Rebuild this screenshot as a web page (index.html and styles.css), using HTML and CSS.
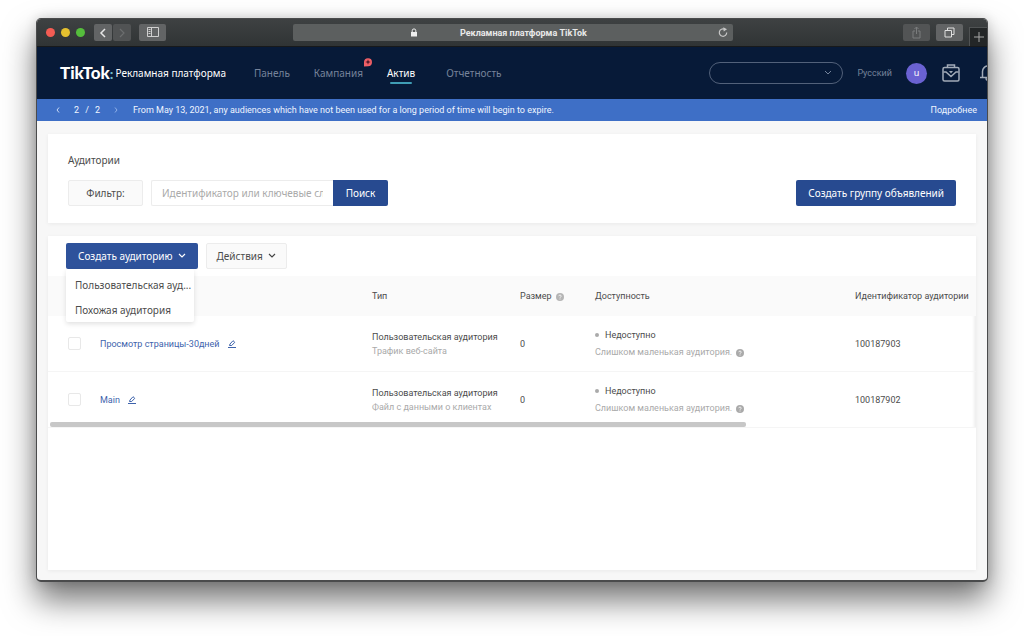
FILE: index.html
```html
<!DOCTYPE html>
<html lang="ru">
<head>
<meta charset="utf-8">
<title>Рекламная платформа TikTok</title>
<link rel="stylesheet" href="styles.css">
</head>
<body>
<div class="window">
  <div class="browser-bar">
    <div class="lights"><span class="light red"></span><span class="light yellow"></span><span class="light green"></span></div>
    <div class="history">
      <button class="chrome-btn back" aria-label="Назад"><svg width="8" height="10" viewBox="0 0 8 10"><path d="M6 1 2 5l4 4" fill="none" stroke="#e6e6e6" stroke-width="1.5"/></svg></button>
      <button class="chrome-btn forward" aria-label="Вперёд"><svg width="8" height="10" viewBox="0 0 8 10"><path d="m2 1 4 4-4 4" fill="none" stroke="#6c6e6f" stroke-width="1.2"/></svg></button>
    </div>
    <button class="chrome-btn sidebar" aria-label="Боковая панель"><svg width="13" height="11" viewBox="0 0 13 11"><path d="M1.500.500h11v9h-11zM5.500.500v9M2.500 2.500h2M2.500 4.500h2M2.500 6.500h2" fill="none" stroke="#cfcfcf"/></svg></button>
    <div class="address">
      <svg class="lock" width="8" height="9" viewBox="0 0 8 9"><path d="M1 4h6v4.500H1z" fill="#eee"/><path d="M2.200 4V2.700a1.800 1.800 0 0 1 3.600 0V4" fill="none" stroke="#eee"/></svg>
      <span class="page-title">Рекламная платформа TikTok</span>
      <svg class="reload" width="10" height="11" viewBox="0 0 10 11"><path d="M8.700 5.500A3.700 3.700 0 1 1 6.500 2.200" fill="none" stroke="#c8c8c8" stroke-width="1.200"/><path d="M5.300.2 9 2.300 5.700 4.600z" fill="#c8c8c8"/></svg>
    </div>
    <button class="chrome-btn share" aria-label="Поделиться"><svg width="11" height="13" viewBox="0 0 11 13"><path d="M4 5H2v7h7V5H7M5.500 8V1M3.500 3l2-2 2 2" fill="none" stroke="#7b7d7e"/></svg></button>
    <button class="chrome-btn tabs" aria-label="Вкладки"><svg width="11" height="11" viewBox="0 0 11 11"><path d="M1 3.500h6.500V10H1z" fill="none" stroke="#e0e0e0"/><path d="M3.500 3.500V1H10v6.500H7.500" fill="none" stroke="#e0e0e0"/></svg></button>
    <button class="new-tab" aria-label="Новая вкладка"><svg width="10" height="10" viewBox="0 0 10 10"><path d="M5 0v10M0 5h10" stroke="#a8a8a8"/></svg></button>
  </div>

  <header class="site-header">
    <div class="brand"><span class="logo">TikTok<span class="colon">:</span></span><span class="product">Рекламная платформа</span></div>
    <nav class="nav">
      <a href="#">Панель</a>
      <a href="#">Кампания<svg class="spark" width="10" height="10" viewBox="0 0 10 10"><path d="M1 9.500V5a4 4 0 1 1 4 4.200z" fill="#ee5f66"/><path d="M5 2.300 5.700 4.300 7.700 5 5.700 5.700 5 7.700 4.300 5.700 2.300 5 4.300 4.300z" fill="#4a1626"/></svg></a>
      <a href="#" class="active">Актив</a>
      <a href="#">Отчетность</a>
    </nav>
    <button class="account" aria-label="Аккаунт"><svg width="8" height="6" viewBox="0 0 8 6"><path d="m1 1 3 3 3-3" fill="none" stroke="#74839b"/></svg></button>
    <a href="#" class="lang">Русский</a>
    <span class="avatar">u</span>
    <button class="icon-btn case" aria-label="Бизнес-центр"><svg width="18" height="18" viewBox="0 0 18 18"><g fill="none" stroke="#a2abb8" stroke-width="1.500"><rect x="1" y="3.500" width="16" height="13.500" rx="1.500"/><path d="M5.500 3.500V1h7v2.500M1.500 8 4 8 9 12.500 14 8h2.500"/></g><path d="M7 7h4L9 9.500z" fill="#a2abb8"/></svg></button>
    <button class="icon-btn bell" aria-label="Уведомления"><svg width="18" height="18" viewBox="0 0 18 18"><path d="M1 13.500h16M3.500 13.500V7.500a5.500 5.500 0 0 1 11 0v6M9 2V.5M7 14c0 3 4 3 4 0" fill="none" stroke="#a2abb8" stroke-width="1.500"/></svg></button>
  </header>

  <div class="notice">
    <button class="step" aria-label="Предыдущее"><svg width="4" height="6" viewBox="0 0 4 6"><path d="M3 .5 1 3l2 2.500" fill="none" stroke="#c9d9f4"/></svg></button>
    <span class="count"><span>2</span><span>/</span><span>2</span></span>
    <button class="step" aria-label="Следующее"><svg width="4" height="6" viewBox="0 0 4 6"><path d="m1 .5 2 2.500-2 2.500" fill="none" stroke="#8fb0e8"/></svg></button>
    <p class="message">From May 13, 2021, any audiences which have not been used for a long period of time will begin to expire.</p>
    <a href="#" class="more">Подробнее</a>
  </div>

  <main class="content">
    <section class="card search-card">
      <h1>Аудитории</h1>
      <div class="search-row">
        <button class="btn plain filter">Фильтр:</button>
        <form class="search">
          <input type="text" aria-label="Поиск аудитории" placeholder="Идентификатор или ключевые сл">
          <button type="button" class="btn primary find">Поиск</button>
        </form>
        <button class="btn primary group">Создать группу объявлений</button>
      </div>
    </section>

    <section class="card list-card">
      <div class="toolbar">
        <div class="dropdown">
          <button class="btn primary create">Создать аудиторию <svg width="8" height="6" viewBox="0 0 8 6"><path d="m1 1 3 3 3-3" fill="none" stroke="#fff" stroke-width="1.200"/></svg></button>
          <div class="menu">
            <button>Пользовательская ауд...</button>
            <button>Похожая аудитория</button>
          </div>
        </div>
        <button class="btn plain actions">Действия <svg width="8" height="6" viewBox="0 0 8 6"><path d="m1 1 3 3 3-3" fill="none" stroke="#444" stroke-width="1.200"/></svg></button>
      </div>
      <div class="table-wrap">
        <table>
          <colgroup><col class="c-check"><col class="c-name"><col class="c-type"><col class="c-size"><col class="c-state"><col></colgroup>
          <thead>
            <tr><th></th><th></th><th>Тип</th><th>Размер <svg class="help" width="8" height="8" viewBox="0 0 8 8"><circle cx="4" cy="4" r="4" fill="#b5b5b5"/><path d="M2.800 3.200c0-1.600 2.400-1.600 2.400 0C5.200 4 4 4 4 4.800M4 5.500v1" fill="none" stroke="#fff" stroke-width=".8"/></svg></th><th>Доступность</th><th>Идентификатор аудитории</th></tr>
          </thead>
          <tbody>
            <tr>
              <td><input type="checkbox" aria-label="Просмотр страницы-30дней"></td>
              <td><a href="#">Просмотр страницы-30дней</a><button class="edit" aria-label="Изменить"><svg width="8" height="8" viewBox="0 0 8 8"><path d="M1.500 5.500 2 4 5 .7 6.800 2.300 3.700 5.500zM0 7.500h8" fill="none" stroke="#3e63ac"/></svg></button></td>
              <td><div class="main">Пользовательская аудитория</div><div class="sub">Трафик веб-сайта</div></td>
              <td>0</td>
              <td><div class="state">Недоступно</div><div class="reason">Слишком маленькая аудитория. <svg class="help" width="8" height="8" viewBox="0 0 8 8"><circle cx="4" cy="4" r="4" fill="#aaa"/><path d="M2.800 3.200c0-1.600 2.400-1.600 2.400 0C5.200 4 4 4 4 4.800M4 5.500v1" fill="none" stroke="#fff" stroke-width=".8"/></svg></div></td>
              <td>100187903</td>
            </tr>
            <tr>
              <td><input type="checkbox" aria-label="Main"></td>
              <td><a href="#">Main</a><button class="edit" aria-label="Изменить"><svg width="8" height="8" viewBox="0 0 8 8"><path d="M1.500 5.500 2 4 5 .7 6.800 2.300 3.700 5.500zM0 7.500h8" fill="none" stroke="#3e63ac"/></svg></button></td>
              <td><div class="main">Пользовательская аудитория</div><div class="sub">Файл с данными о клиентах</div></td>
              <td>0</td>
              <td><div class="state">Недоступно</div><div class="reason">Слишком маленькая аудитория. <svg class="help" width="8" height="8" viewBox="0 0 8 8"><circle cx="4" cy="4" r="4" fill="#aaa"/><path d="M2.800 3.200c0-1.600 2.400-1.600 2.400 0C5.200 4 4 4 4 4.800M4 5.500v1" fill="none" stroke="#fff" stroke-width=".8"/></svg></div></td>
              <td>100187902</td>
            </tr>
          </tbody>
        </table>
        <div class="scroll-thumb"></div>
      </div>
    </section>
  </main>
</div>
</body>
</html>
```
FILE: styles.css
```css
* { box-sizing: border-box; }

body {
  margin: 0;
  min-height: 100vh;
  padding: 18px 36px 54px;
  display: flex;
  background: #fff;
  color: #4c4c4c;
  font: 10px/16px "Noto Sans", "Open Sans", sans-serif;
}

button, input { font: inherit; color: inherit; }
button { border: 0; padding: 0; background: none; display: inline-flex; align-items: center; justify-content: center; }
a { color: inherit; text-decoration: none; }
svg { display: block; flex: none; }

.window {
  flex: 1;
  min-width: 0;
  display: flex;
  flex-direction: column;
  overflow: hidden;
  border: 1px solid #4a4b4c;
  border-bottom-width: 2px;
  border-radius: 5px;
  background: #f7f7f7;
  box-shadow: 0 18px 32px rgba(0, 0, 0, .55), 0 0 12px rgba(0, 0, 0, .15);
}

/* Browser chrome */
.browser-bar {
  height: 28px;
  display: flex;
  align-items: center;
  padding-left: 9px;
  background: linear-gradient(#3e4142, #303435);
  border-bottom: 1px solid #17191b;
}
.lights { display: flex; gap: 6px; }
.light { width: 9px; height: 9px; border-radius: 50%; }
.red { background: #f45c53; }
.yellow { background: #e5c02f; }
.green { background: #55bd3c; }
.history { display: flex; gap: 1px; margin-left: 9px; }
.chrome-btn { height: 17px; width: 27px; border-radius: 2px; background: #626465; }
.history .chrome-btn { width: 18px; }
.history .forward { background: #515354; }
.sidebar { margin-left: 8px; }
.address {
  flex: 1;
  height: 17px;
  margin-left: 127px;
  display: flex;
  align-items: center;
  padding: 0 5px 0 117px;
  border-radius: 2px;
  background: #5c5f5f;
}
.page-title { margin-left: 42px; margin-right: auto; color: #e9e9e9; font: 700 9px/16px Roboto, sans-serif; }
.share { margin-left: 170px; background: #525455; }
.tabs { margin-left: 6px; }
.new-tab { align-self: flex-end; width: 18px; height: 19px; margin-left: 6px; background: #232627; border-left: 1px solid #505354; border-top: 1px solid #505354; }

/* Site header */
.site-header {
  height: 52px;
  display: flex;
  align-items: center;
  padding-left: 23px;
  overflow: hidden;
  background: #071a38;
  color: #76839a;
}
.brand { display: flex; align-items: center; gap: 2px; color: #fff; white-space: nowrap; }
.logo { font: 900 17px/20px Lato, sans-serif; }
.colon { color: #6fb7c8; font-size: 14px; }
.nav { display: flex; gap: 24px; margin-left: 28px; }
.nav a { position: relative; line-height: 20px; }
.nav .active { color: #fff; }
.nav .active::after { content: ""; position: absolute; left: 3px; right: 3px; bottom: -1px; height: 2px; border-radius: 1px; background: #3f9db5; }
.spark { position: absolute; top: -6px; right: -10px; }
.nav a:last-child { margin-left: 7px; }
.account { margin-left: auto; width: 134px; height: 22px; padding-right: 10px; justify-content: flex-end; border: 1px solid #52617a; border-radius: 11px; }
.lang { margin-left: 14px; font-family: Roboto, sans-serif; font-size: 9px; }
.avatar { width: 21px; height: 21px; margin-left: 14px; border-radius: 50%; background: #6a62d2; color: #fff; font-size: 9px; line-height: 20px; text-align: center; }
.case { margin-left: 15px; }
.bell { margin-left: 19px; margin-right: -10px; }

/* Announcement */
.notice { height: 22px; display: flex; align-items: center; padding: 0 10px 0 19px; background: #3e6fc6; color: #f0f5ff; font-family: Roboto, sans-serif; font-size: 9px; white-space: nowrap; }
.count { display: flex; justify-content: space-between; width: 26px; margin: 0 14px; }
.message { margin: 0 0 0 15px; }
.more { margin-left: auto; }

/* Content */
.content { flex: 1; display: flex; flex-direction: column; gap: 13px; padding: 13px 11px 10px; }
.card { background: #fff; box-shadow: 0 1px 4px rgba(0, 0, 0, .06); }
.search-card { padding: 18px 20px 17px; }
h1 { margin: 0 0 12px; font-size: 10px; line-height: 16px; font-weight: 400; }
.search-row { display: flex; align-items: center; }
.btn { height: 26px; padding: 0 12px; gap: 5px; border-radius: 2px; white-space: nowrap; }
.primary { background: #274a90; color: #fff; }
.plain { background: #fafafa; border: 1px solid #ececec; }
.filter { width: 75px; }
.actions { padding: 0 10px; }
.search { display: flex; margin-left: 8px; }
.search input { width: 182px; height: 26px; padding: 0 10px; border: 1px solid #ececec; border-right: 0; border-radius: 2px 0 0 2px; background: #fff; outline: 0; }
.search input::placeholder { color: #aaa; opacity: 1; }
.find { width: 55px; border-radius: 0 2px 2px 0; }
.group { margin-left: auto; }

.list-card { flex: 1; }
.toolbar { display: flex; gap: 8px; padding: 7px 18px; }
.dropdown { position: relative; }
.create { background: #2e529b; }
.menu { position: absolute; z-index: 2; top: 26px; left: 0; width: 128px; padding: 3px 0 0; border-radius: 2px; background: #fff; box-shadow: 0 2px 5px rgba(0, 0, 0, .12); }
.menu button { display: block; width: 100%; height: 25px; padding-left: 9px; text-align: left; white-space: nowrap; }

.table-wrap { position: relative; }
table { width: 100%; border-collapse: separate; border-spacing: 0; table-layout: fixed; font-family: Roboto, sans-serif; font-size: 9px; line-height: 14px; }
.c-check { width: 52px; }
.c-name { width: 272px; }
.c-type { width: 148px; }
.c-size { width: 75px; }
.c-state { width: 260px; }
th, td { padding: 0; text-align: left; font-weight: 400; vertical-align: middle; white-space: nowrap; }
th { height: 40px; background: #fafafa; }
td { height: 56px; border-bottom: 1px solid #f5f5f5; }
td:last-child { box-shadow: inset -4px 0 3px -2px #eee; }
td a { color: #3e63ac; }
td input { appearance: none; display: block; width: 13px; height: 13px; margin: 0 0 0 20px; border: 1px solid #e8e8e8; border-radius: 2px; background: #fff; }
.edit { margin-left: 8px; vertical-align: middle; }
.sub, .reason { color: #aaa; }
.help { display: inline-block; margin-left: 2px; vertical-align: middle; }
.state { display: flex; align-items: center; gap: 6px; margin-bottom: 3px; }
.state::before { content: ""; width: 4px; height: 4px; border-radius: 50%; background: #aaa; }
.scroll-thumb { position: absolute; left: 2px; bottom: 1px; width: 75%; height: 5px; border-radius: 2px; background: #c7c7c7; }
```
